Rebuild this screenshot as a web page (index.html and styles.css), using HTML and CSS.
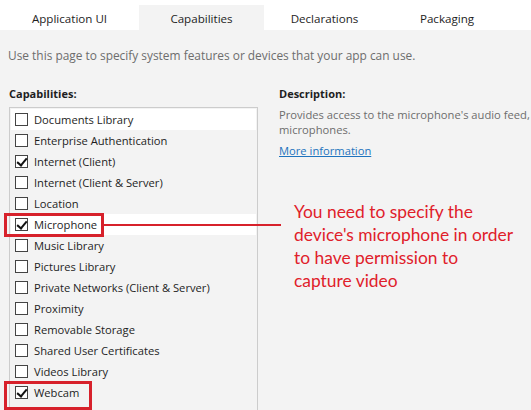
FILE: index.html
```html
<!DOCTYPE html>
<html>
<head>
<meta charset="utf-8">
<link rel="stylesheet" href="styles.css">
</head>
<body>
<div class="page">
  <div class="tabs">
    <div class="tab t1">Application UI</div>
    <div class="tab t2 active">Capabilities</div>
    <div class="tab t3">Declarations</div>
    <div class="tab t4">Packaging</div>
  </div>
  <div class="content">
    <p class="intro">Use this page to specify system features or devices that your app can use.</p>
    <div class="cols">
      <div class="left">
        <div class="heading">Capabilities:</div>
        <div class="list">
          <div class="row hl"><span class="cb"></span>Documents Library</div>
          <div class="row"><span class="cb"></span>Enterprise Authentication</div>
          <div class="row"><span class="cb on"></span>Internet (Client)</div>
          <div class="row"><span class="cb"></span>Internet (Client &amp; Server)</div>
          <div class="row"><span class="cb"></span>Location</div>
          <div class="row hl"><span class="cb on"></span>Microphone</div>
          <div class="row"><span class="cb"></span>Music Library</div>
          <div class="row"><span class="cb"></span>Pictures Library</div>
          <div class="row"><span class="cb"></span>Private Networks (Client &amp; Server)</div>
          <div class="row"><span class="cb"></span>Proximity</div>
          <div class="row"><span class="cb"></span>Removable Storage</div>
          <div class="row"><span class="cb"></span>Shared User Certificates</div>
          <div class="row"><span class="cb"></span>Videos Library</div>
          <div class="row"><span class="cb on"></span>Webcam</div>
        </div>
      </div>
      <div class="right">
        <div class="heading">Description:</div>
        <div class="desc">Provides access to the microphone's audio feed,<br>microphones.</div>
        <a class="more" href="#">More information</a>
      </div>
    </div>
  </div>
  <div class="box box-mic"></div>
  <div class="line"></div>
  <div class="box box-cam"></div>
  <div class="note">You need to specify the<br>device's microphone in order<br>to have permission to<br>capture video</div>
</div>
</body>
</html>
```
FILE: styles.css
```css
* { box-sizing: border-box; }
html, body { margin: 0; padding: 0; }
body {
  width: 531px;
  height: 410px;
  overflow: hidden;
  font-family: "Open Sans", "Noto Sans", sans-serif;
  font-size: 11.2px;
  color: #1e1e1e;
  background: #f3f3f3;
}
.page { position: relative; width: 531px; height: 410px; overflow: hidden; }
.tabs {
  display: flex;
  height: 30px;
  background: #fff;
  padding-top: 5px;
}
.tab {
  display: flex;
  align-items: center;
  justify-content: center;
  height: 25px;
  padding-top: 1px;
  font-size: 11.6px;
  color: #1e1e1e;
}
.t1 { width: 139px; }
.t2 { width: 125px; }
.t3 { width: 121px; }
.t4 { width: 124px; }
.tab.active { background: #f3f3f3; }
.content { padding: 0 0 0 8px; }
.intro {
  margin: 0;
  padding-top: 17px;
  height: 56px;
  font-size: 11.9px;
  color: #6d6d6d;
  white-space: nowrap;
}
.cols { display: flex; }
.left { width: 271px; padding-left: 1px; }
.heading { font-weight: bold; font-size: 11px; height: 21px; color: #1e1e1e; }
.list {
  width: 249px;
  border: 1px solid #cccccc;
  border-bottom: none;
  padding: 1px 1px 0 1px;
  height: 320px;
}
.row {
  height: 21px;
  display: flex;
  align-items: center;
  padding-left: 4px;
  white-space: nowrap;
  color: #1e1e1e;
}
.row.hl { background: #fff; }
.cb {
  width: 13px;
  height: 13px;
  border: 1px solid #444;
  background: #fff;
  margin-right: 6px;
  flex: none;
  position: relative;
}
.cb.on::after {
  content: "";
  position: absolute;
  left: 3px;
  top: 0px;
  width: 4px;
  height: 8px;
  border-right: 2px solid #111;
  border-bottom: 2px solid #111;
  transform: rotate(40deg);
}
.right { width: 252px; white-space: nowrap; overflow: hidden; }
.desc { color: #6d6d6d; line-height: 15px; }
.more {
  display: inline-block;
  margin-top: 6px;
  color: #1e73be;
  text-decoration: underline;
}
.box {
  position: absolute;
  border: 3px solid #d7212b;
}
.box-mic { left: 4px; top: 213px; width: 100px; height: 24px; }
.box-cam { left: 4px; top: 381px; width: 88px; height: 29px; }
.line {
  position: absolute;
  left: 103px;
  top: 224px;
  width: 178px;
  height: 2px;
  background: #d7212b;
}
.note {
  position: absolute;
  left: 294px;
  top: 200px;
  width: 236px;
  font-family: "Lato", "Open Sans", sans-serif;
  font-size: 17.4px;
  line-height: 23px;
  color: #e0202a;
}
```
